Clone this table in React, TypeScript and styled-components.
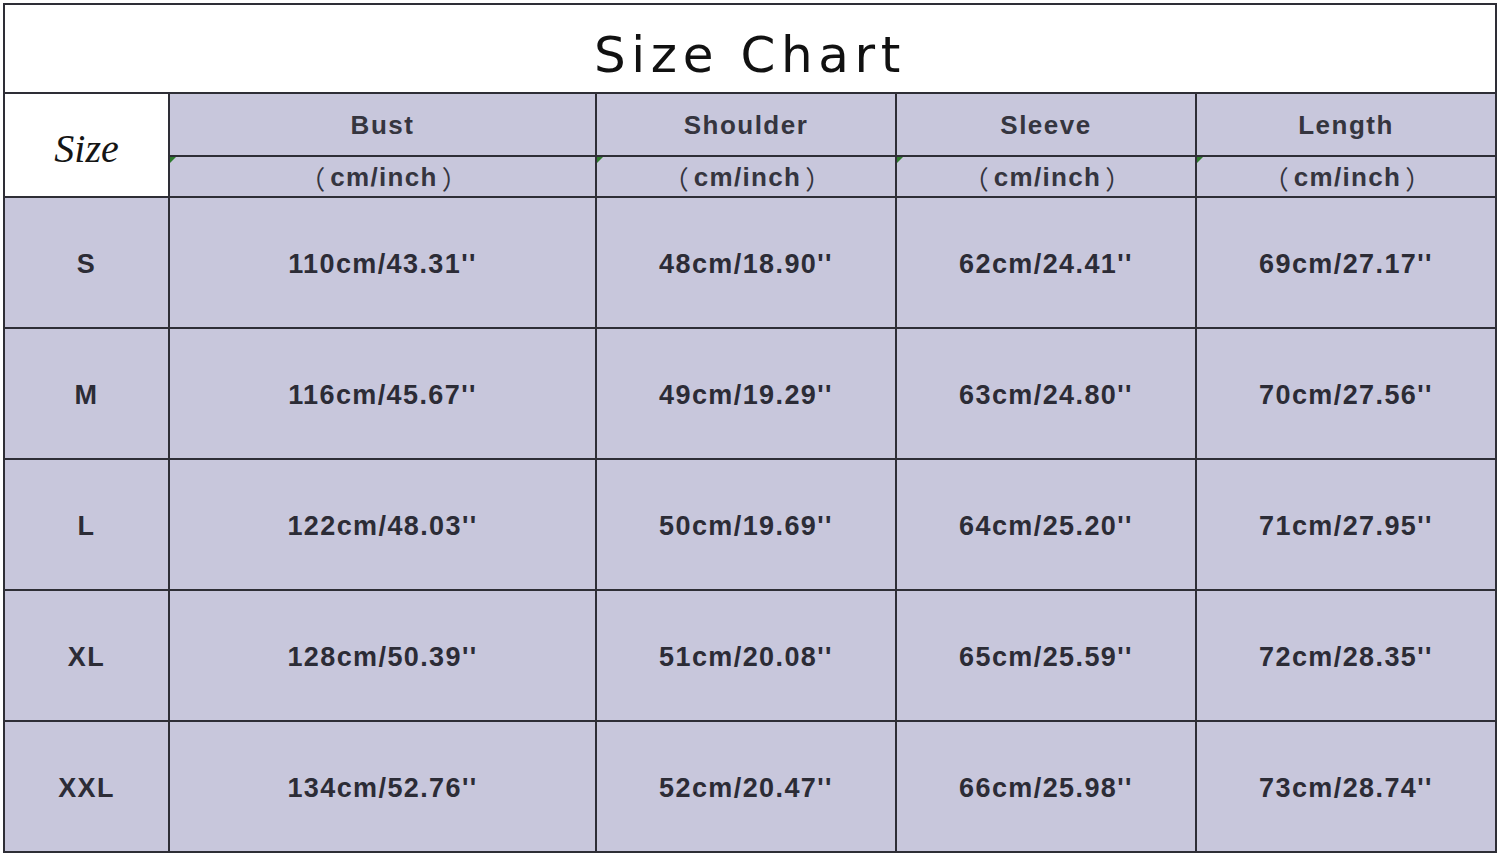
import styled, { createGlobalStyle } from 'styled-components';

const GlobalStyle = createGlobalStyle`
  html, body {
    margin: 0;
    padding: 0;
    background: #ffffff;
  }
  body {
    font-family: 'Liberation Sans', Arial, sans-serif;
  }
`;

const columns = ['Bust', 'Shoulder', 'Sleeve', 'Length'];

const rows: { size: string; values: string[] }[] = [
  { size: 'S', values: ["110cm/43.31''", "48cm/18.90''", "62cm/24.41''", "69cm/27.17''"] },
  { size: 'M', values: ["116cm/45.67''", "49cm/19.29''", "63cm/24.80''", "70cm/27.56''"] },
  { size: 'L', values: ["122cm/48.03''", "50cm/19.69''", "64cm/25.20''", "71cm/27.95''"] },
  { size: 'XL', values: ["128cm/50.39''", "51cm/20.08''", "65cm/25.59''", "72cm/28.35''"] },
  { size: 'XXL', values: ["134cm/52.76''", "52cm/20.47''", "66cm/25.98''", "73cm/28.74''"] },
];

const App: React.FC = () => {
  return (
    <Page>
      <GlobalStyle />
      <Chart>
        <Title>Size Chart</Title>
        <SizeHead>Size</SizeHead>
        {columns.map((c) => (
          <HeadCell key={c}>{c}</HeadCell>
        ))}
        {columns.map((c) => (
          <UnitCell key={c + '-unit'}>
            <Marker />
            <Paren $side="left">（</Paren>
            cm/inch
            <Paren $side="right">）</Paren>
          </UnitCell>
        ))}
        {rows.map((r) => (
          <Row key={r.size}>
            <Cell>{r.size}</Cell>
            {r.values.map((v, i) => (
              <Cell key={i}>{v}</Cell>
            ))}
          </Row>
        ))}
      </Chart>
    </Page>
  );
};

const Page = styled.div`
  padding: 3px;
  width: 1494px;
`;

const Chart = styled.div`
  display: grid;
  grid-template-columns: 163px 425px 298px 298px 298px;
  grid-template-rows: 87px 61px 39px repeat(5, 129px);
  gap: 2px;
  padding: 2px;
  background: #2e2e36;
`;

const Row = styled.div`
  display: contents;
`;

const Title = styled.div`
  grid-column: 1 / -1;
  background: #ffffff;
  display: flex;
  align-items: center;
  justify-content: center;
  font-family: 'DejaVu Sans', sans-serif;
  font-size: 50px;
  letter-spacing: 5.6px;
  color: #111111;
  padding-top: 12px;
`;

const SizeHead = styled.div`
  grid-row: 2 / span 2;
  background: #ffffff;
  display: flex;
  align-items: center;
  justify-content: center;
  font-family: 'Liberation Serif', 'Times New Roman', serif;
  font-style: italic;
  font-size: 40px;
  color: #151515;
  padding-top: 6px;
`;

const Cell = styled.div`
  background: #c8c7dc;
  display: flex;
  align-items: center;
  justify-content: center;
  font-weight: 700;
  font-size: 27px;
  letter-spacing: 1.4px;
  color: #2c2c36;
  position: relative;
  padding-top: 4px;
`;

const HeadCell = styled(Cell)`
  font-size: 26px;
  color: #35353f;
  letter-spacing: 1.5px;
  padding-top: 2px;
`;

const UnitCell = styled(Cell)`
  font-size: 26px;
  color: #35353f;
  letter-spacing: 1.3px;
  padding-top: 2px;
`;

const Paren = styled.span<{ $side: 'left' | 'right' }>`
  font-family: 'Noto Sans CJK SC', sans-serif;
  font-weight: 400;
  letter-spacing: 0;
  display: inline-block;
  width: 24px;
  text-align: ${(p) => (p.$side === 'left' ? 'right' : 'left')};
  margin-right: ${(p) => (p.$side === 'left' ? '7px' : '0')};
  margin-left: ${(p) => (p.$side === 'right' ? '4px' : '0')};
`;

const Marker = styled.span`
  position: absolute;
  top: 0;
  left: 0;
  width: 0;
  height: 0;
  border-top: 6px solid #2c7a2c;
  border-right: 6px solid transparent;
`;

export default App;
